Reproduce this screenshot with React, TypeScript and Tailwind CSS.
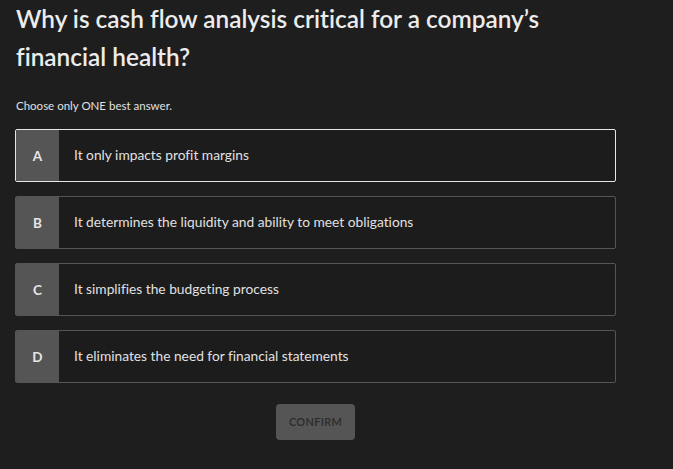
const options = [
  { key: "A", text: "It only impacts profit margins", selected: true },
  { key: "B", text: "It determines the liquidity and ability to meet obligations", selected: false },
  { key: "C", text: "It simplifies the budgeting process", selected: false },
  { key: "D", text: "It eliminates the need for financial statements", selected: false },
];

export default function App() {
  return (
    <div className="min-h-screen w-full bg-[#1e1e1e] px-[15px] text-[#e8e8e8] font-['Lato','Noto_Sans',sans-serif] [font-feature-settings:'liga'_0]">
      <div className="w-[601px]">
        <h1 className="pl-[1px] text-[24.4px] font-semibold leading-[38px] text-[#ececec]">
          Why is cash flow analysis critical for a company’s financial health?
        </h1>

        <p className="mt-[21px] pl-[1px] text-[11.5px] text-[#e0e0e0]">Choose only ONE best answer.</p>

        <div className="mt-[15px] flex flex-col gap-[14px]">
          {options.map(o => (
            <button
              key={o.key}
              className={`flex h-[53px] w-full items-stretch overflow-hidden rounded-[2px] border text-left ${
                o.selected ? "border-[#e6e6e6]" : "border-[#555555]"
              } bg-[#1c1c1c]`}
            >
              <span className="flex w-[43px] shrink-0 items-center justify-center bg-[#555555] text-[13.5px] font-bold text-[#e6e6e6]">
                {o.key}
              </span>
              <span className="flex items-center pl-[15px] text-[13.75px] text-[#e0e0e0]">{o.text}</span>
            </button>
          ))}
        </div>

        <div className="mt-[21px] flex justify-center">
          <button className="h-[36px] w-[79px] rounded-[4px] bg-[#555555] text-[11px] font-semibold tracking-[0.3px] text-[#2c2c2c]">
            CONFIRM
          </button>
        </div>
      </div>
    </div>
  );
}
